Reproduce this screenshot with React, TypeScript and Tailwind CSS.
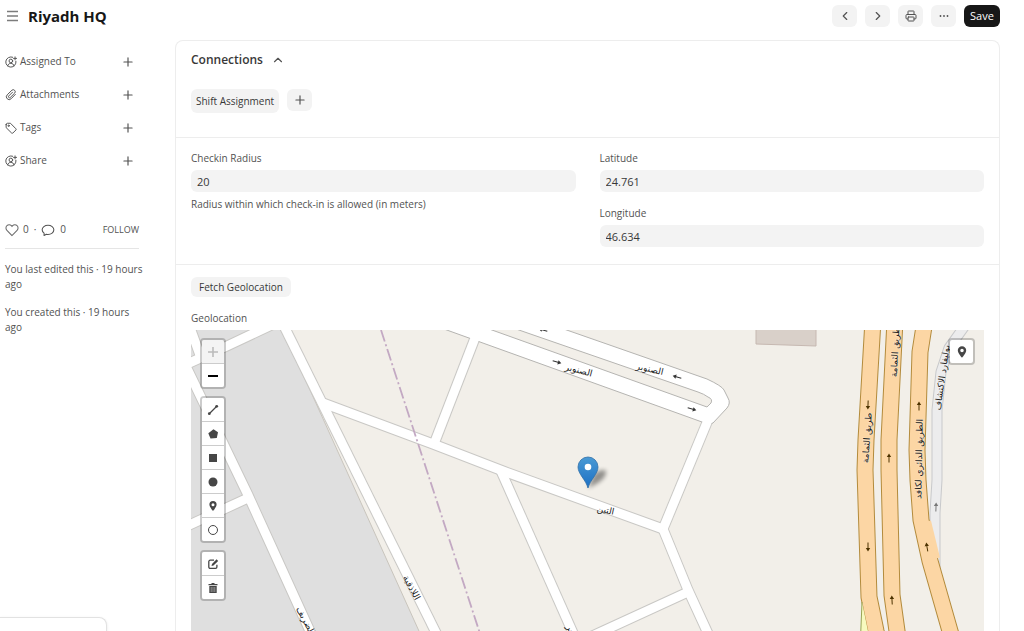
import type { ReactNode } from "react";
import { ChevronLeft, ChevronRight, ChevronUp, Plus, Printer } from "lucide-react";

type Point = [number, number];

const pathOf = (points: Point[]) => "M" + points.map((p) => p.join(" ")).join(" L");

const streets: Point[][] = [
  [[188, 322], [201, 358]],
  [[185, 365], [227, 346], [280, 321]],
  [[183, 360], [248, 495], [319, 651]],
  [[185, 527], [248, 498]],
  [[281, 320], [445, 651]],
  [[323, 403], [433, 444], [503, 471], [663, 529]],
  [[434, 444], [475, 338]],
  [[501, 471], [581, 651]],
  [[663, 529], [708, 420]],
  [[663, 529], [688, 590], [716, 651]],
  [[688, 592], [603, 631], [560, 651]],
];

const highways: Point[][] = [
  [[873, 320], [866, 440], [865, 470], [869, 597], [876, 631], [881, 651]],
  [[895, 320], [889, 440], [889, 470], [892, 595], [897, 631], [900, 651]],
  [[925, 320], [920, 352], [917, 450], [918, 480], [921, 520], [930, 561], [950, 631], [956, 651]],
];

const serviceRoad: Point[] = [[969, 320], [949, 348], [941, 372], [937, 410], [937, 480], [935, 513], [935, 570]];

const arrows = [
  { x: 557, y: 362, angle: 17, color: "#333" },
  { x: 692, y: 409, angle: 17, color: "#333" },
  { x: 677, y: 377, angle: 197, color: "#333" },
  { x: 543, y: 330, angle: 197, color: "#333" },
  { x: 868, y: 405, angle: 92, color: "#4d3300" },
  { x: 889, y: 458, angle: -90, color: "#4d3300" },
  { x: 919, y: 406, angle: -90, color: "#4d3300" },
  { x: 868, y: 547, angle: 90, color: "#4d3300" },
  { x: 892, y: 600, angle: -93, color: "#4d3300" },
  { x: 927, y: 547, angle: -100, color: "#4d3300" },
  { x: 936, y: 507, angle: -88, color: "#777" },
];

const streetNames = [
  { text: "الصنوبر", x: 578, y: 373, angle: 15 },
  { text: "الصنوبر", x: 649, y: 372, angle: 13 },
  { text: "التين", x: 605, y: 513, angle: 12 },
  { text: "اللاذقية", x: 409, y: 589, angle: 62 },
  { text: "الضريف", x: 303, y: 622, angle: 62 },
  { text: "عسير", x: 571, y: 636, angle: 62 },
  { text: "طريق الثمامة", x: 870, y: 438, angle: -86 },
  { text: "طريق الثمامة", x: 898, y: 352, angle: -87 },
  { text: "الطريق الدائري لكافد", x: 922, y: 459, angle: -89 },
  { text: "بوليفارد الاكتشاف", x: 945, y: 378, angle: -82 },
];

const sidebarItems = [
  { label: "Assigned To", icon: <AssignIcon /> },
  { label: "Attachments", icon: <ClipIcon /> },
  { label: "Tags", icon: <TagIcon /> },
  { label: "Share", icon: <AssignIcon /> },
];

function SmallIcon({ children }: { children: ReactNode }) {
  return (
    <svg viewBox="0 0 16 16" className="h-3 w-3 shrink-0" fill="none" stroke="#525252" strokeWidth="1.300" strokeLinecap="round" strokeLinejoin="round">
      {children}
    </svg>
  );
}

function AssignIcon() {
  return (
    <SmallIcon>
      <path d="M10.200 1.600A6.800 6.800 0 1 0 14.600 7" />
      <circle cx="7.800" cy="6.600" r="2.400" />
      <path d="M3.600 13.200c.5-2.200 2-3.400 4.200-3.400s3.700 1.200 4.200 3.400M13.400 1.200v4M11.400 3.200h4" />
    </SmallIcon>
  );
}

function ClipIcon() {
  return (
    <SmallIcon>
      <path d="M13.800 7.200 8.200 13a3.700 3.700 0 0 1-5.300-5.200l6.300-6.200a2.700 2.700 0 0 1 3.800 3.800L7 11.300a1.400 1.400 0 0 1-2-2l5-5" />
    </SmallIcon>
  );
}

function TagIcon() {
  return (
    <SmallIcon>
      <path d="M1.500 3.500v4l7.300 7.200a1.200 1.200 0 0 0 1.700 0l4-4a1.200 1.200 0 0 0 0-1.700L7.300 1.700H3.300a1.800 1.800 0 0 0-1.800 1.800Z" />
      <circle cx="4.800" cy="5" r=".9" />
    </SmallIcon>
  );
}

function IconButton({ label, children }: { label: string; children: ReactNode }) {
  return (
    <button type="button" aria-label={label} className="flex h-[22px] w-[25px] items-center justify-center rounded-md bg-[#f3f3f3] text-[#525252]">
      {children}
    </button>
  );
}

function Field({ id, label, value, help }: { id: string; label: string; value: string; help?: string }) {
  return (
    <div>
      <label htmlFor={id} className="block text-[10px] leading-4 text-[#525252]">
        {label}
      </label>
      <input id={id} defaultValue={value} className="mt-1 block h-[22px] w-full rounded-md bg-[#f3f3f3] px-1.5 text-[11px] text-[#383838] outline-none" />
      {help && <p className="mt-1 text-[10px] leading-4 text-[#525252]">{help}</p>}
    </div>
  );
}

function MapButton({ label, disabled, children }: { label: string; disabled?: boolean; children: ReactNode }) {
  return (
    <button
      type="button"
      aria-label={label}
      disabled={disabled}
      className="flex h-6 w-[22px] items-center justify-center border-b border-[#ccc] bg-white text-[#464646] last:h-[23px] last:border-b-0 disabled:bg-[#f4f4f4] disabled:text-[#bbb]"
    >
      <svg viewBox="0 0 12 12" className="h-3 w-3" fill="currentColor">
        {children}
      </svg>
    </button>
  );
}

function MapBar({ children }: { children: ReactNode }) {
  return <div className="overflow-hidden rounded border-2 border-black/20 bg-clip-padding">{children}</div>;
}

const pinShape = "M6 1a3.600 3.600 0 0 0-3.600 3.600C2.400 7.200 6 11 6 11s3.600-3.800 3.600-6.400A3.600 3.600 0 0 0 6 1Zm0 2.200a1.500 1.500 0 1 1 0 3 1.500 1.500 0 0 1 0-3Z";

function StreetMap() {
  return (
    <svg viewBox="191 330 793 301" preserveAspectRatio="xMidYMin slice" className="block h-full w-full" role="img" aria-label="Street map">
      <defs>
        <linearGradient id="pin" x1="0" y1="0" x2="0" y2="1">
          <stop offset="0" stopColor="#4a9ad4" />
          <stop offset="1" stopColor="#1c6fc4" />
        </linearGradient>
        <filter id="soft" x="-50%" y="-50%" width="200%" height="200%">
          <feGaussianBlur stdDeviation="2" />
        </filter>
      </defs>
      <rect x="191" y="330" width="793" height="600" fill="#f2efe9" />
      <path d="M180 320H277L310 390L428 651H180Z" fill="#dfdfdf" stroke="#c9c5bd" strokeWidth="1" />
      <path d="M756 325H816V346L756 344Z" fill="#d9d0c9" stroke="#c6b8b1" />

      <g fill="none" strokeLinejoin="round">
        {streets.map((s, i) => <path key={i} d={pathOf(s)} stroke="#c9c8c5" strokeWidth="11" />)}
        <path d="M419 320L702 422Q709 425 713 423L727 408Q731 403 728 398L724 390Q722 386 707 379L538 320Z" fill="#fff" stroke="#b5b4b1" />
        <path d="M464 320L707 407L711 403Q713 399 708 397Q704 394 698 392L490 320Z" fill="#f2efe9" stroke="#b5b4b1" />
        {streets.map((s, i) => <path key={i} d={pathOf(s)} stroke="#fff" strokeWidth="9" />)}
        <path d="M381 330L486 652" stroke="#c3a9c3" strokeWidth="1.800" strokeDasharray="12 3 2 3" />

        <path d={pathOf(serviceRoad)} stroke="#c8c9cb" strokeWidth="11" />
        <path d={pathOf(serviceRoad)} stroke="#ececed" strokeWidth="9" />
        {highways.map((s, i) => <path key={i} d={pathOf(s)} stroke="#b38b3c" strokeWidth="17" />)}
        {highways.map((s, i) => <path key={i} d={pathOf(s)} stroke="#fcd6a4" strokeWidth="15" />)}
        <path d="M929 521L938 558" stroke="#fcd6a4" strokeWidth="4" />
        <path d="M862 602L860 651H872Z" fill="#f7fabf" />
        <path d="M862 602L860 651" stroke="#98a455" />
      </g>

      {arrows.map((a, i) => (
        <g key={i} transform={`translate(${a.x} ${a.y}) rotate(${a.angle})`} fill={a.color}>
          <path d="M-4.500 -.5H1V-2.200L4.500 0L1 2.200V.5H-4.500Z" />
        </g>
      ))}

      <g fill="#222" stroke="#fff" strokeOpacity=".4" strokeWidth="1" paintOrder="stroke" textAnchor="middle" className="font-['DejaVu_Sans',sans-serif] text-[9px]">
        {streetNames.map((n, i) => (
          <text key={i} transform={`translate(${n.x} ${n.y}) rotate(${n.angle})`}>{n.text}</text>
        ))}
      </g>

      <path d="M588 488L594 474Q602 468 606 471Q607 480 588 488Z" fill="#000" opacity=".4" filter="url(#soft)" />
      <path d="M588 488C586 480 578 474 578 467A10 10 0 0 1 598 467C598 474 590 480 588 488Z" fill="url(#pin)" stroke="#2e6fa8" strokeWidth=".8" />
      <circle cx="588" cy="467" r="3.300" fill="#fff" />
    </svg>
  );
}

export default function App() {
  return (
    <div className="flex h-screen flex-col overflow-hidden bg-white pr-6 font-['Open_Sans','Noto_Sans',sans-serif] text-[#383838]">
      <header className="flex h-8 shrink-0 items-center justify-between pl-1.5">
        <div className="flex items-center gap-2">
          <button type="button" aria-label="Toggle sidebar" className="text-[#7c7c7c]">
            <svg viewBox="0 0 14 14" className="h-3.5 w-3.5" stroke="currentColor" strokeWidth="1.400">
              <path d="M1 2.500H12M1 7H12M1 11.500H12" />
            </svg>
          </button>
          <h1 className="text-[15px] font-bold text-[#171717]">Riyadh HQ</h1>
        </div>
        <div className="flex items-center gap-2">
          <IconButton label="Previous"><ChevronLeft size={14} strokeWidth={2} /></IconButton>
          <IconButton label="Next"><ChevronRight size={14} strokeWidth={2} /></IconButton>
          <IconButton label="Print"><Printer size={12} strokeWidth={2} /></IconButton>
          <IconButton label="More">
            <svg viewBox="0 0 12 12" className="h-3 w-3" fill="currentColor">
              <circle cx="2.500" cy="6" r=".9" /><circle cx="6" cy="6" r=".9" /><circle cx="9.500" cy="6" r=".9" />
            </svg>
          </IconButton>
          <button type="button" className="h-[22px] w-9 rounded-md bg-[#171717] text-[11px] text-white">Save</button>
        </div>
      </header>

      <div className="flex min-h-0 flex-1 gap-9 pt-2">
        <aside className="w-[139px] shrink-0 pt-[5px] pl-[5px] text-[10px] text-[#525252]">
          <ul>
            {sidebarItems.map((item) => (
              <li key={item.label} className="flex h-[33px] items-center gap-[3px]">
                {item.icon}
                <span className="flex-1">{item.label}</span>
                <button type="button" aria-label={`Add ${item.label}`} className="mr-1"><Plus size={14} strokeWidth={2} /></button>
              </li>
            ))}
          </ul>
          <div className="mt-[45px] flex h-[27px] items-start border-b border-[#e5e5e5]">
            <button type="button" className="flex items-center gap-1">
              <svg viewBox="0 0 16 16" className="h-3.5 w-3.5" fill="none" stroke="#6b6b6b" strokeWidth="1.200">
                <path d="M8 14.300 2.200 8.300a3.600 3.600 0 0 1 0-5.200 3.600 3.600 0 0 1 5.100 0L8 3.900l.7-.8a3.600 3.600 0 0 1 5.100 0 3.600 3.600 0 0 1 0 5.200Z" />
              </svg>
              0
            </button>
            <span className="px-[5px]">·</span>
            <button type="button" className="flex items-center gap-[5px]">
              <svg viewBox="0 0 16 16" className="h-3.5 w-3.5" fill="none" stroke="#525252" strokeWidth="1.200" strokeLinejoin="round">
                <path d="M3.500 14.200V11.600C2.200 10.700 1.300 9.300 1.300 7.800c0-2.900 3-5.300 6.700-5.300s6.700 2.400 6.700 5.300-3 5.300-6.700 5.300c-.7 0-1.300-.1-1.900-.2Z" />
              </svg>
              0
            </button>
            <button type="button" className="ml-auto text-[9px] leading-[15px]">FOLLOW</button>
          </div>
          <p className="-mr-2 mt-[13px] leading-[15px]">You last edited this · 19 hours ago</p>
          <p className="mt-[13px] leading-[15px]">You created this · 19 hours ago</p>
        </aside>

        <main className="flex min-w-0 flex-1 flex-col overflow-hidden rounded-t-lg border border-b-0 border-[#ededed]">
          <section className="h-[97px] border-b border-[#ededed] px-[15px] pt-[11px]">
            <h2 className="text-xs font-semibold">
              <button type="button" className="flex items-center gap-2">
                Connections <ChevronUp size={14} strokeWidth={2} className="text-[#525252]" />
              </button>
            </h2>
            <div className="mt-[21px] flex gap-2">
              <button type="button" className="h-6 rounded-md bg-[#f3f3f3] px-[5px] text-[10px] font-medium">Shift Assignment</button>
              <IconButton label="New Shift Assignment"><Plus size={14} strokeWidth={2} /></IconButton>
            </div>
          </section>

          <section className="grid grid-cols-2 gap-6 border-b border-[#ededed] px-[15px] pt-3 pb-[17px]">
            <Field id="radius" label="Checkin Radius" value="20" help="Radius within which check-in is allowed (in meters)" />
            <div className="space-y-[13px]">
              <Field id="latitude" label="Latitude" value="24.761" />
              <Field id="longitude" label="Longitude" value="46.634" />
            </div>
          </section>

          <section className="flex min-h-0 flex-1 flex-col px-[15px] pt-3">
            <button type="button" className="h-5 self-start rounded-md bg-[#f3f3f3] px-2 text-[10px] font-medium">Fetch Geolocation</button>
            <h3 className="mt-[13px] text-[10px] leading-4 text-[#525252]">Geolocation</h3>
            <div className="relative mt-1 min-h-0 flex-1">
              <StreetMap />
              <div className="absolute top-2 left-[9px] space-y-[7px]">
                <MapBar>
                  <MapButton label="Zoom in" disabled><path d="M5.200 1H6.800V5.200H11V6.800H6.800V11H5.200V6.800H1V5.200H5.200Z" /></MapButton>
                  <MapButton label="Zoom out"><path d="M1 5H11V7H1Z" fill="#000" /></MapButton>
                </MapBar>
                <MapBar>
                  <MapButton label="Draw a line"><path d="M2.500 9.500 9.500 2.500" stroke="currentColor" strokeWidth="1.200" /><circle cx="2.300" cy="9.700" r="1.400" /><circle cx="9.700" cy="2.300" r="1.400" /></MapButton>
                  <MapButton label="Draw a polygon"><path d="M6.500 1.200 11 4.200 9.800 10 3.500 10.500 1.300 5.200Z" /></MapButton>
                  <MapButton label="Draw a rectangle"><path d="M2 2H10V10H2Z" /></MapButton>
                  <MapButton label="Draw a circle"><circle cx="6" cy="6" r="4.500" /></MapButton>
                  <MapButton label="Draw a marker"><path fillRule="evenodd" d={pinShape} /></MapButton>
                  <MapButton label="Draw a circle marker"><circle cx="6" cy="6" r="4.500" fill="none" stroke="currentColor" /></MapButton>
                </MapBar>
                <MapBar>
                  <MapButton label="Edit layers">
                    <path d="M7 2.200H3.200A1.400 1.400 0 0 0 1.800 3.600V9A1.400 1.400 0 0 0 3.200 10.400H8.500A1.400 1.400 0 0 0 9.900 9V6.800" fill="none" stroke="currentColor" strokeWidth="1.300" />
                    <path d="M4.500 8 5 6 9.600 1.300 11.200 2.900 6.500 7.500Z" />
                  </MapButton>
                  <MapButton label="Delete layers"><path d="M4.500 1H7.500V2H10.500V3.200H1.500V2H4.500ZM2.300 4H9.700V11H2.300Z" /><path d="M4.200 5V10M6 5V10M7.800 5V10" stroke="#aaa" strokeWidth=".8" /></MapButton>
                </MapBar>
              </div>
              <div className="absolute top-2 right-[9px]">
                <button type="button" aria-label="Locate me" className="flex h-[27px] w-[27px] items-center justify-center rounded border-2 border-black/20 bg-white bg-clip-padding text-[#464646]">
                  <svg viewBox="0 0 12 12" className="h-3.5 w-3.5" fill="currentColor"><path fillRule="evenodd" d={pinShape} /></svg>
                </button>
              </div>
            </div>
          </section>
        </main>
      </div>

      <div className="fixed bottom-0 left-0 h-3.5 w-[107px] rounded-tr-lg border-t border-r border-[#e2e2e2] bg-white shadow" />
    </div>
  );
}
